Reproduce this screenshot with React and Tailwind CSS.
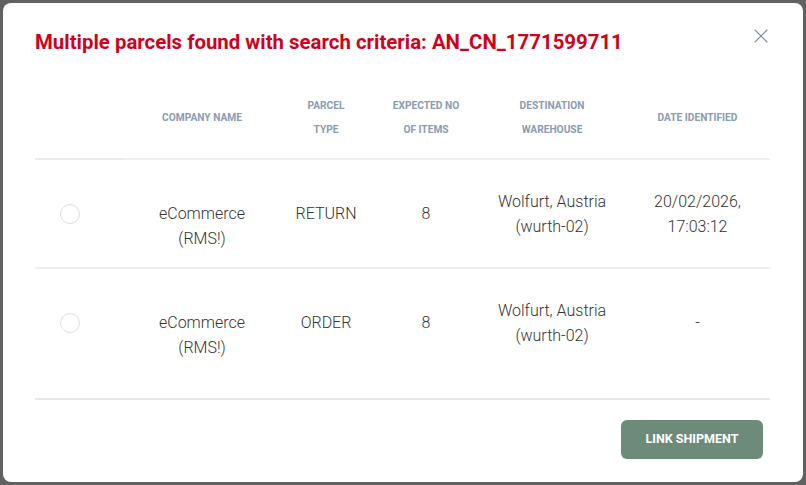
import { X } from 'lucide-react';

const columns = [
  { key: 'select', label: '', width: 'w-[90px]' },
  { key: 'company', label: 'COMPANY NAME', width: 'w-[154px]' },
  { key: 'type', label: ['PARCEL', 'TYPE'], width: 'w-[94px]' },
  { key: 'items', label: ['EXPECTED NO', 'OF ITEMS'], width: 'w-[106px]' },
  { key: 'warehouse', label: ['DESTINATION', 'WAREHOUSE'], width: 'w-[146px]' },
  { key: 'date', label: 'DATE IDENTIFIED', width: 'w-[145px]' },
];

const parcels = [
  { id: 1, company: ['eCommerce', '(RMS!)'], type: 'RETURN', items: 8, warehouse: ['Wolfurt, Austria', '(wurth-02)'], date: ['20/02/2026,', '17:03:12'] },
  { id: 2, company: ['eCommerce', '(RMS!)'], type: 'ORDER', items: 8, warehouse: ['Wolfurt, Austria', '(wurth-02)'], date: ['-'] },
];

const Lines = ({ lines }) => (
  <div className="flex flex-col">
    {lines.map((l, i) => (
      <span key={i}>{l}</span>
    ))}
  </div>
);

const App = () => {
  return (
    <div className="w-[806px] h-[485px] bg-[#616161] p-[3px] font-['Roboto',sans-serif]">
      <div className="w-[800px] h-[479px] bg-white rounded-[8px] flex flex-col pl-[32px] pr-[33px]">
        {/* Titre */}
        <div className="flex items-start justify-between pt-[27px]">
          <h2 className="text-[20.4px] leading-[24px] font-bold text-[#d0021b]">
            Multiple parcels found with search criteria: AN_CN_1771599711
          </h2>
          <button className="mr-[-3px] mt-[-6px] text-[#7d8ca3]">
            <X className="w-6 h-6" strokeWidth={1.1} />
          </button>
        </div>

        {/* Tableau */}
        <div className="mt-[24px]">
          <div className="flex text-[10.2px] leading-[24px] font-bold text-[#8a9bb4] text-center">
            {columns.map((c, i) => (
              <div
                key={c.key}
                className={`${c.width} py-[16px] flex items-center justify-center border-b-2 ${i === 0 ? 'border-[#ebebeb]' : 'border-[#efefef]'}`}
              >
                {Array.isArray(c.label) ? <Lines lines={c.label} /> : <span>{c.label}</span>}
              </div>
            ))}
          </div>

          {parcels.map((p, idx) => (
            <div
              key={p.id}
              className={`flex items-center py-[16px] text-[16px] leading-[25px] font-light text-[#333] text-center ${idx === 0 ? 'border-b-2 border-[#efefef]' : ''}`}
            >
              <div className="w-[90px] flex justify-start pl-[25px]">
                <span className="w-[20px] h-[20px] rounded-full border border-[#dedede]" />
              </div>
              <div className="w-[154px] pt-[25px]">
                <Lines lines={p.company} />
              </div>
              <div className="w-[94px]">{p.type}</div>
              <div className="w-[106px]">{p.items}</div>
              <div className="w-[146px]">
                <Lines lines={p.warehouse} />
              </div>
              <div className="w-[145px]">
                <Lines lines={p.date} />
              </div>
            </div>
          ))}
        </div>

        {/* Pied */}
        <div className="mt-[22px] border-t-2 border-[#e5e9ee] flex justify-end pt-[20px] pr-[7px]">
          <button className="w-[142px] h-[39px] rounded-[6px] bg-[#6e8a79] text-white text-[12.5px] font-bold">
            LINK SHIPMENT
          </button>
        </div>
      </div>
    </div>
  );
};

export default App;
